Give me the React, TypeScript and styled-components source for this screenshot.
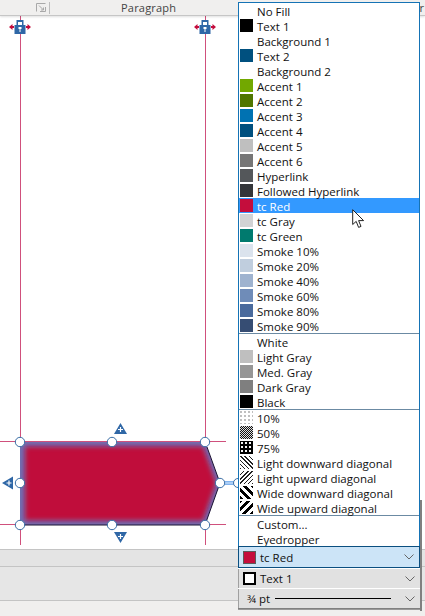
import styled, {createGlobalStyle, css} from "styled-components";

type ColorRow = { label: string, color?: string, pattern?: PatternName, active?: boolean }
type PatternName = 'p10' | 'p50' | 'p75' | 'lightDown' | 'lightUp' | 'wideDown' | 'wideUp'

const themeRows: ColorRow[] = [
    {label: 'No Fill'},
    {label: 'Text 1', color: '#000000'},
    {label: 'Background 1'},
    {label: 'Text 2', color: '#00507f'},
    {label: 'Background 2'},
    {label: 'Accent 1', color: '#72a800'},
    {label: 'Accent 2', color: '#4f7600'},
    {label: 'Accent 3', color: '#0072b2'},
    {label: 'Accent 4', color: '#00507f'},
    {label: 'Accent 5', color: '#bfbfbf'},
    {label: 'Accent 6', color: '#767676'},
    {label: 'Hyperlink', color: '#54575a'},
    {label: 'Followed Hyperlink', color: '#333539'},
    {label: 'tc Red', color: '#c40d3c', active: true},
    {label: 'tc Gray', color: '#d2d3d4'},
    {label: 'tc Green', color: '#007a6e'},
    {label: 'Smoke 10%', color: '#dbe3ed'},
    {label: 'Smoke 20%', color: '#c0cede'},
    {label: 'Smoke 40%', color: '#9fb3cf'},
    {label: 'Smoke 60%', color: '#6f8cb8'},
    {label: 'Smoke 80%', color: '#4a6a9c'},
    {label: 'Smoke 90%', color: '#364d73'},
]

const grayRows: ColorRow[] = [
    {label: 'White'},
    {label: 'Light Gray', color: '#bfbfbf'},
    {label: 'Med. Gray', color: '#969696'},
    {label: 'Dark Gray', color: '#7f7f7f'},
    {label: 'Black', color: '#000000'},
]

const patternRows: ColorRow[] = [
    {label: '10%', pattern: 'p10'},
    {label: '50%', pattern: 'p50'},
    {label: '75%', pattern: 'p75'},
    {label: 'Light downward diagonal', pattern: 'lightDown'},
    {label: 'Light upward diagonal', pattern: 'lightUp'},
    {label: 'Wide downward diagonal', pattern: 'wideDown'},
    {label: 'Wide upward diagonal', pattern: 'wideUp'},
]

const otherRows: ColorRow[] = [
    {label: 'Custom...'},
    {label: 'Eyedropper'},
]

const sections = [themeRows, grayRows, patternRows, otherRows]

const handles = [
    [20, 426], [112, 426], [205, 426],
    [20, 467], [220, 467],
    [20, 509], [112, 509], [205, 509],
]

function Chevron() {
    return (
        <ChevronIcon viewBox="0 0 10 6">
            <path d="M0.5 0.5 L5 5 L9.5 0.5" fill="none" stroke="#666" strokeWidth="1"/>
        </ChevronIcon>
    )
}

function Lock({x}: {x: number}) {
    return (
        <g transform={`translate(${x} 11)`}>
            <path d="M-11 0 L-7.5 -3 L-7.5 -1 L-6 -1 L-6 1 L-7.5 1 L-7.5 3 Z" fill="#c40d3c"/>
            <path d="M11 0 L7.5 -3 L7.5 -1 L6 -1 L6 1 L7.5 1 L7.5 3 Z" fill="#c40d3c"/>
            <path d="M-3.5 -7 H3.5 V-2 H5.5 V7 H-5.5 V-2 H-3.5 Z" fill="#2f67a6"/>
            <rect x="-2" y="-5" width="4" height="3" fill="#fff"/>
            <rect x="-1.5" y="0" width="3" height="2" fill="#fff"/>
            <rect x="-0.5" y="2" width="1" height="3" fill="#fff"/>
        </g>
    )
}

function Plus({x, y}: {x: number, y: number}) {
    return <path d={`M${x - 2.5} ${y} H${x + 2.5} M${x} ${y - 2.5} V${y + 2.5}`} stroke="#fff" strokeWidth="1.2"/>
}

function Drawing() {
    return (
        <CanvasSvg viewBox="0 0 425 533">
            <defs>
                <filter id="soft" x="-10%" y="-20%" width="120%" height="140%">
                    <feGaussianBlur stdDeviation="2.4"/>
                </filter>
                <clipPath id="outline">
                    <polygon points="20,426 205,426 220,467 205,509 20,509"/>
                </clipPath>
            </defs>

            <g stroke="#d0507c" strokeWidth="1" fill="none">
                <path d="M20.5 0 V529"/>
                <path d="M205.5 0 V529"/>
                <path d="M0 425.5 H226"/>
                <path d="M0 508.5 H226"/>
            </g>

            <Lock x={20}/>
            <Lock x={205}/>

            <polygon points="20,426 205,426 220,467 205,509 20,509" fill="#6f70b4"/>
            <g clipPath="url(#outline)">
                <polygon points="25,430.5 203,430.5 216,467 203,504.5 25,504.5" fill="#c00c3a" filter="url(#soft)"/>
            </g>
            <path d="M207 431 L220 467 L205 509 H20" fill="none" stroke="#1a1030" strokeWidth="1"/>

            <path d="M224 467 H240" stroke="#7fb2ee" strokeWidth="4"/>
            <path d="M224 467 H240" stroke="#b9d6f7" strokeWidth="1.5"/>
            <circle cx="238" cy="467" r="4.5" fill="#fff" stroke="#3a6ea5"/>

            {handles.map(([cx, cy]) => (
                <circle key={`${cx}-${cy}`} cx={cx} cy={cy} r="4.7" fill="#fff" stroke="#3a6ea5" strokeWidth="1"/>
            ))}

            <path d="M120.5 407 L127 418 H114 Z" fill="#2f67a6"/>
            <Plus x={120.5} y={413.5}/>
            <path d="M120.5 527 L127 516 H114 Z" fill="#2f67a6"/>
            <Plus x={120.5} y={520.5}/>
            <path d="M2 467 L13 460.5 V473.5 Z" fill="#2f67a6"/>
            <Plus x={9} y={467}/>
        </CanvasSvg>
    )
}

function App() {
    return (
        <Page>
            <GlobalStyle/>
            <TopBar>
                <LauncherCell>
                    <svg width="10" height="9" viewBox="0 0 10 9">
                        <path d="M0.5 8.5 V0.5 H9.5 M4 8.5 H9.5 V4 M3 2.5 L7.5 7 M7.5 4.5 V7 H5" fill="none" stroke="#a8a8a8"/>
                    </svg>
                </LauncherCell>
                <GroupTitle>Paragraph</GroupTitle>
                <NextTitle>r</NextTitle>
            </TopBar>
            <Canvas>
                <Drawing/>
            </Canvas>
            <Band $height={17} $bg="#e4e4e4"/>
            <Band $height={34} $bg="#e6e6e6"/>
            <Band $height={16} $bg="#f0efee"/>

            <Popup>
                <Menu>
                    {sections.map((rows, i) => (
                        <Section key={i}>
                            {rows.map(row => (
                                <Row key={row.label} $active={row.active}>
                                    <Swatch $color={row.color} $pattern={row.pattern}/>
                                    <RowLabel $active={row.active}>{row.label}</RowLabel>
                                </Row>
                            ))}
                        </Section>
                    ))}
                </Menu>
                <Fields>
                    <Field $focused>
                        <FieldSwatch $fill="#c40d3c" $border="#5a5a5a" $width={1}/>
                        <FieldText>tc Red</FieldText>
                        <Chevron/>
                    </Field>
                    <Field>
                        <FieldSwatch $fill="#ffffff" $border="#000000" $width={2}/>
                        <FieldText>Text 1</FieldText>
                        <Chevron/>
                    </Field>
                    <Field>
                        <WeightText>¾ pt</WeightText>
                        <WeightLine/>
                        <Chevron/>
                    </Field>
                </Fields>
            </Popup>

            <Pointer viewBox="0 0 13 20">
                <path d="M0.7 0.7 V15.5 L4.2 12.4 L6.6 18.4 L9 17.4 L6.6 11.6 L11.6 11.6 Z" fill="#fff" stroke="#222" strokeWidth="1"/>
            </Pointer>
        </Page>
    )
}

export default App

const GlobalStyle = createGlobalStyle`
    html, body {
        margin: 0;
        padding: 0;
        background: #fff;
    }
`

const Page = styled.div`
    position: relative;
    width: 425px;
    height: 616px;
    overflow: hidden;
    display: flex;
    flex-direction: column;
    font-family: "Open Sans", "Noto Sans", sans-serif;
    color: #111;
`

const TopBar = styled.div`
    height: 15px;
    flex: none;
    display: flex;
    align-items: center;
    background: #f0efee;
    border-bottom: 1px solid #c6c6c6;
    box-shadow: 0 1px 2px rgba(0, 0, 0, 0.12);
    position: relative;
    z-index: 1;
`

const LauncherCell = styled.div`
    width: 50px;
    height: 12px;
    flex: none;
    display: flex;
    justify-content: flex-end;
    align-items: center;
    padding-right: 3px;
    box-sizing: border-box;
    border-right: 1px solid #bdbdbd;
`

const GroupTitle = styled.span`
    margin-left: 71px;
    font-size: 11px;
    letter-spacing: 0.2px;
    color: #444;
`

const NextTitle = styled.span`
    margin-left: auto;
    padding-right: 1px;
    font-size: 11px;
    color: #444;
`

const Canvas = styled.div`
    flex: 1;
    background: #fff;
    min-height: 0;
`

const CanvasSvg = styled.svg`
    display: block;
    width: 425px;
    height: 533px;
`

const Band = styled.div<{$height: number, $bg: string}>`
    height: ${props => props.$height}px;
    flex: none;
    box-sizing: border-box;
    background: ${props => props.$bg};
    border-top: 1px solid #c4c4c4;
`

const Popup = styled.div`
    position: absolute;
    z-index: 2;
    left: 238px;
    top: 2px;
    width: 182px;
    display: flex;
    flex-direction: column;

    &::after {
        content: '';
        position: absolute;
        right: -2px;
        top: 498px;
        bottom: -2px;
        width: 2px;
        background: #808080;
    }
`

const Menu = styled.div`
    background: #fff;
    border: 1px solid #1573b5;
    border-bottom: none;
    box-sizing: border-box;
`

const Section = styled.div`
    border-bottom: 1px solid #6b8aa3;

    &:last-child {
        border-bottom: none;
    }
`

const Row = styled.div<{$active?: boolean}>`
    height: 15px;
    display: flex;
    align-items: center;
    gap: 4px;
    padding-left: 1px;
    ${props => props.$active && css`
        background: #3399ff;
    `}
`

const RowLabel = styled.span<{$active?: boolean}>`
    font-size: 11.5px;
    line-height: 15px;
    margin-top: 1px;
    white-space: nowrap;
    color: ${props => props.$active ? '#fff' : '#111'};
`

const patterns: Record<PatternName, ReturnType<typeof css>> = {
    p10: css`
        background: radial-gradient(circle at 1px 1px, #333 0.5px, transparent 0.8px) 0 0 / 4px 4px #fff;
    `,
    p50: css`
        background: conic-gradient(#111 25%, #ddd 0 50%, #111 0 75%, #ddd 0) 0 0 / 2px 2px;
    `,
    p75: css`
        background: radial-gradient(circle at 2px 2px, #fff 0.7px, transparent 0.9px) 0 0 / 4px 4px #000;
    `,
    lightDown: css`
        background: repeating-linear-gradient(45deg, #222 0 1px, #fff 1px 3px);
    `,
    lightUp: css`
        background: repeating-linear-gradient(-45deg, #222 0 1px, #fff 1px 3px);
    `,
    wideDown: css`
        background: repeating-linear-gradient(45deg, #000 0 2.6px, #fff 2.6px 5.6px);
    `,
    wideUp: css`
        background: repeating-linear-gradient(-45deg, #000 0 2.6px, #fff 2.6px 5.6px);
    `,
}

const Swatch = styled.span<{$color?: string, $pattern?: PatternName}>`
    width: 13px;
    height: 13px;
    flex: none;
    background: ${props => props.$color || 'transparent'};
    ${props => props.$pattern && patterns[props.$pattern]}
`

const Fields = styled.div`
    display: flex;
    flex-direction: column;
    gap: 1px;
    background: #fff;
    border-bottom: 1px solid #808080;
    box-shadow: 0 1px 0 #9a9a9a;
`

const Field = styled.div<{$focused?: boolean}>`
    height: ${props => props.$focused ? 22 : 19}px;
    box-sizing: border-box;
    display: flex;
    align-items: center;
    padding: 0 5px 0 4px;
    background: ${props => props.$focused ? '#cce4f7' : '#e1e1e1'};
    border: ${props => props.$focused ? '1px solid #0b4f80' : 'none'};
    border-left: 1px solid ${props => props.$focused ? '#0b4f80' : '#a0a0a0'};
`

const FieldSwatch = styled.span<{$fill: string, $border: string, $width: number}>`
    width: 13px;
    height: 13px;
    flex: none;
    box-sizing: border-box;
    background: ${props => props.$fill};
    border: ${props => props.$width}px solid ${props => props.$border};
`

const FieldText = styled.span`
    margin-left: 4px;
    flex: 1;
    font-size: 11.5px;
`

const WeightText = styled.span`
    margin-left: 4px;
    font-size: 11.5px;
`

const WeightLine = styled.span`
    flex: 1;
    height: 1px;
    margin: 0 14px 0 5px;
    background: #000;
`

const ChevronIcon = styled.svg`
    width: 10px;
    height: 6px;
    flex: none;
`

const Pointer = styled.svg`
    position: absolute;
    z-index: 3;
    left: 352px;
    top: 209px;
    width: 13px;
    height: 20px;
`
